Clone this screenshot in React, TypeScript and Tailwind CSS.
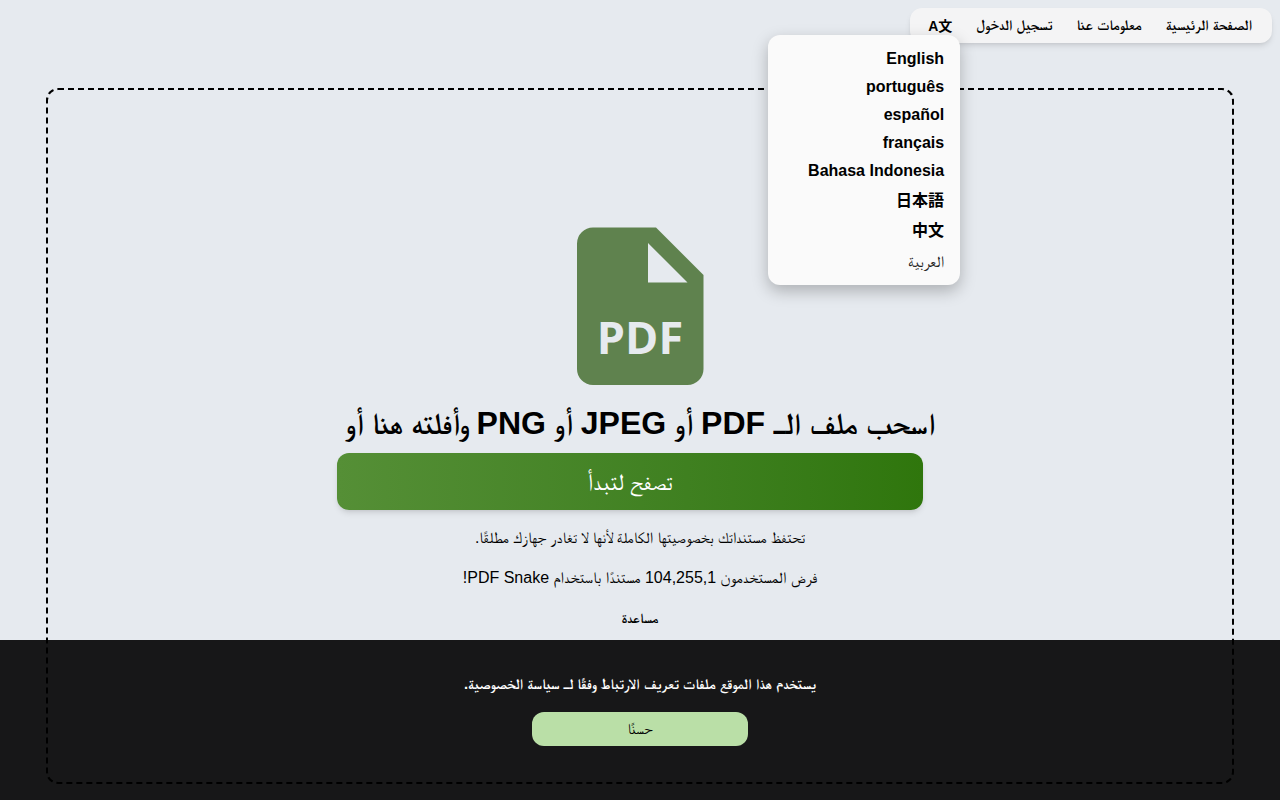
import React from 'react';

const languages = ['English', 'português', 'español', 'français', 'Bahasa Indonesia'];

const PdfIcon = () => (
  <svg width="127" height="158" viewBox="0 0 127 158" className="block">
    <path
      fill="#5f824e"
      fillRule="evenodd"
      d="M16 0.5H79L126.500 48V142a16 16 0 0 1-16 16H16a16 16 0 0 1-16-16V16.500a16 16 0 0 1 16-16ZM71 16V55.500H110.500Z"
    />
    <text x="63" y="127" textAnchor="middle" fill="#e6eaef" fontSize="45" fontWeight="700" fontFamily="'Open Sans', sans-serif" direction="ltr">
      PDF
    </text>
  </svg>
);

const App = () => {
  return (
    <div dir="rtl" className="relative h-screen overflow-hidden bg-[#e6eaef] text-black font-['Liberation_Sans','FreeSerif','Noto_Sans_CJK_JP',sans-serif]">
      <div className="flex justify-start pt-2 pr-2">
        <nav className="relative flex h-[35px] items-center gap-6 rounded-xl bg-[#f4f4f5] pr-5 pl-[18px] text-[14.6px] font-bold shadow-md">
          <a>الصفحة الرئيسية</a>
          <a>معلومات عنا</a>
          <a>تسجيل الدخول</a>
          <a dir="ltr" className="text-sm">A文</a>
          <div className="absolute top-[27px] left-[-142px] z-20 flex h-[250px] w-[192px] flex-col rounded-xl bg-[#fafafa] px-4 pt-[10px] text-base shadow-[0_6px_16px_rgba(0,0,0,0.25)]">
            {languages.map((lang) => (
              <a key={lang} className="block h-7 leading-7">{lang}</a>
            ))}
            <a className="block h-[31px] leading-[31px]">日本語</a>
            <a className="block h-[30px] leading-[30px]">中文</a>
            <a className="block h-[31px] leading-[31px] font-normal text-[#222222]">العربية</a>
          </div>
        </nav>
      </div>

      <main className="mx-[46px] mt-[45px] flex h-[696px] flex-col items-center rounded-xl border-2 border-dashed border-black pt-[137px]">
        <PdfIcon />
        <h1 className="mt-[18px] text-3xl leading-[40px] font-bold">
          اسحب ملف الـ <span className="text-[32px]">PDF</span> أو <span className="text-[32px]">JPEG</span> أو <span className="text-[32px]">PNG</span> وأفلته هنا أو
        </h1>
        <button className="mt-[9px] mr-[20px] h-[57px] w-[586px] rounded-xl bg-gradient-to-r from-[#558f36] to-[#2f760c] text-2xl text-white shadow-md">
          تصفح لتبدأ
        </button>
        <p className="mt-4 text-[15.7px] leading-6">تحتفظ مستنداتك بخصوصيتها الكاملة لأنها لا تغادر جهازك مطلقًا.</p>
        <p className="mt-4 leading-6">فرض المستخدمون 104,255,1 مستندًا باستخدام PDF Snake!</p>
        <a className="mt-4 text-sm leading-6 font-bold">مساعدة</a>
      </main>

      <div className="absolute inset-x-0 bottom-0 z-10 flex h-40 flex-col items-center bg-black/90 pt-8">
        <p className="text-[14.7px] leading-6 font-bold text-white">يستخدم هذا الموقع ملفات تعريف الارتباط وفقًا لـ سياسة الخصوصية.</p>
        <button className="mt-4 h-[34px] w-[216px] rounded-xl bg-[#badfa7] text-[15px] text-black">حسنًا</button>
      </div>
    </div>
  );
};

export default App;
